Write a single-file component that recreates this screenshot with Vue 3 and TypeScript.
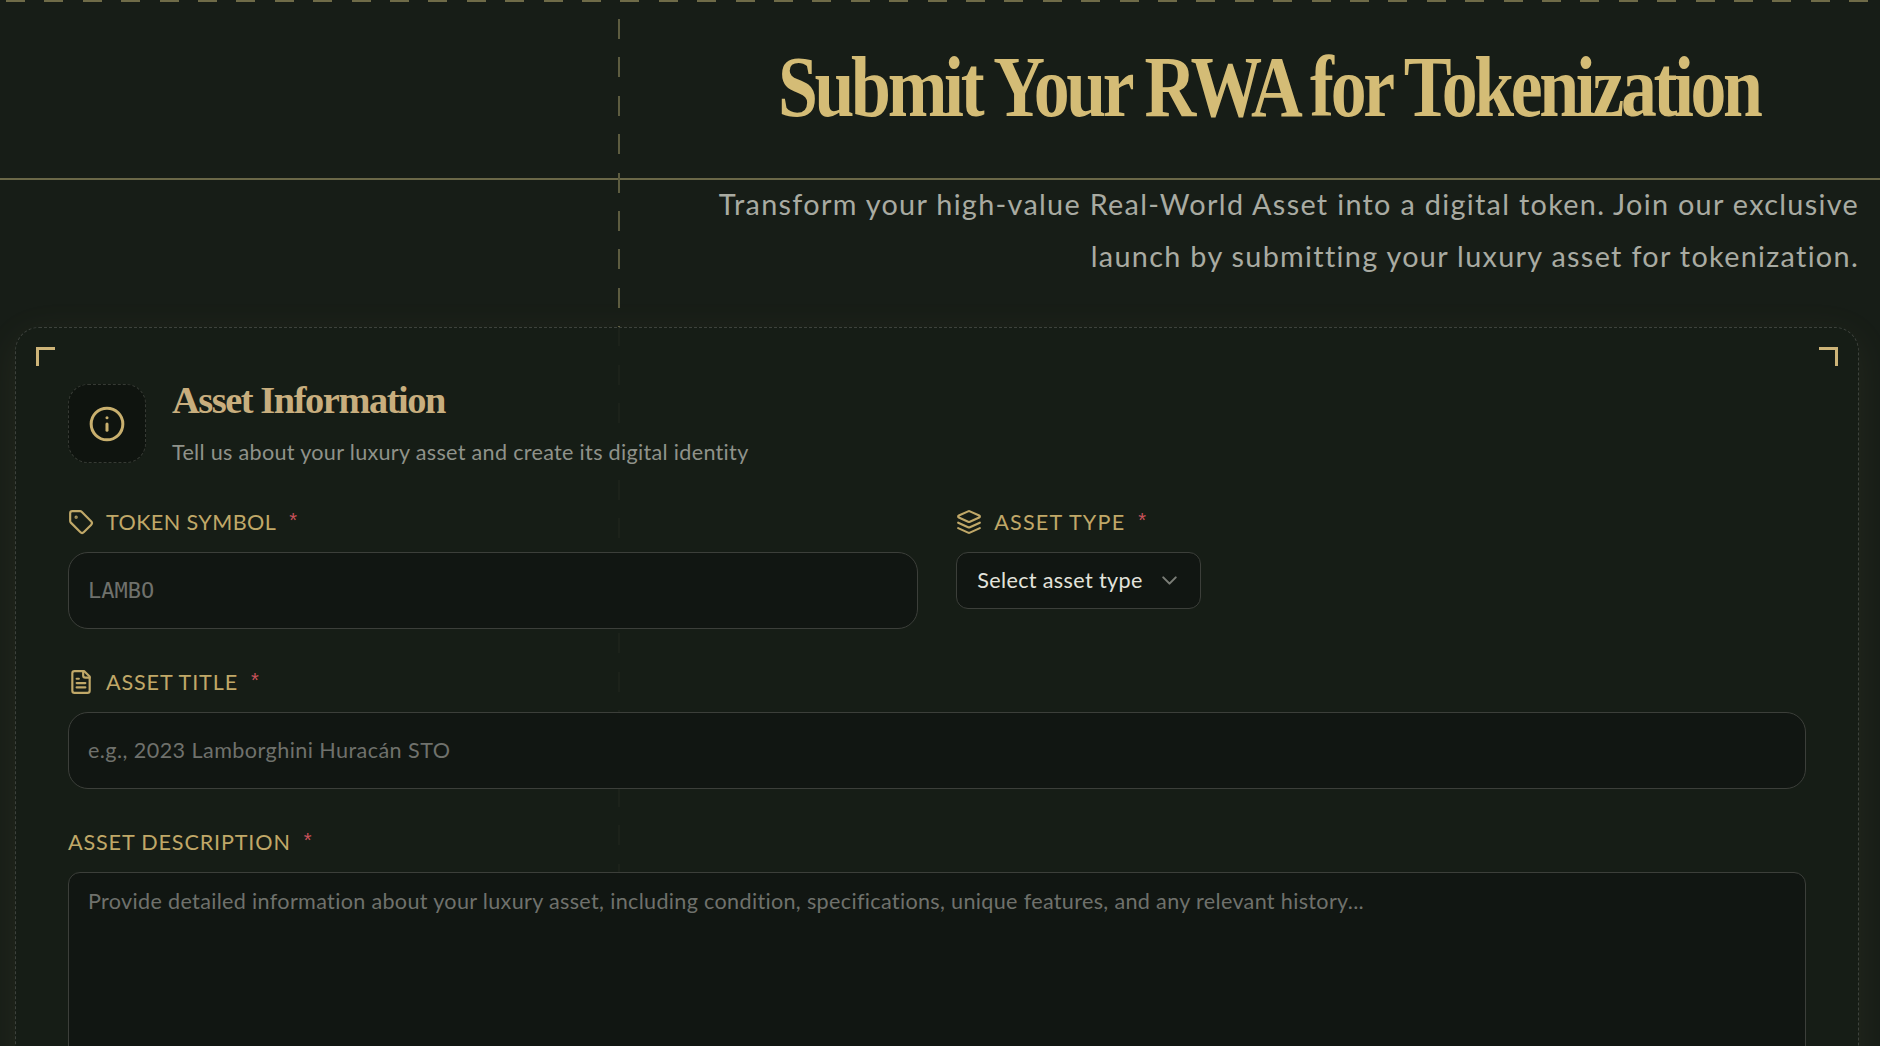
<script setup lang="ts">
import { reactive } from 'vue'

const form = reactive({
  symbol: '',
  title: '',
  description: '',
})
</script>

<template>
  <div class="page">
    <div class="top-dash"></div>
    <div class="v-dash"></div>

    <header class="hero">
      <div class="hero-title">
        <h1>Submit Your RWA for Tokenization</h1>
      </div>
      <p class="hero-sub">
        Transform your high-value Real-World Asset into a digital token. Join our exclusive<br />
        launch by submitting your luxury asset for tokenization.
      </p>
    </header>

    <section class="card">
      <span class="corner corner-l"></span>
      <span class="corner corner-r"></span>

      <div class="section-head">
        <div class="icon-box">
          <svg width="38" height="38" viewBox="0 0 24 24" fill="none" stroke="currentColor" stroke-width="1.9" stroke-linecap="round" stroke-linejoin="round">
            <circle cx="12" cy="12" r="10" />
            <path d="M12 16v-4" />
            <path d="M12 8h.01" />
          </svg>
        </div>
        <div>
          <h2>Asset Information</h2>
          <p>Tell us about your luxury asset and create its digital identity</p>
        </div>
      </div>

      <div class="two-col">
        <div class="field">
          <label class="label label-token">
            <svg class="label-icon" width="26" height="26" viewBox="0 0 24 24" fill="none" stroke="currentColor" stroke-width="2" stroke-linecap="round" stroke-linejoin="round">
              <path d="M12.586 2.586A2 2 0 0 0 11.172 2H4a2 2 0 0 0-2 2v7.172a2 2 0 0 0 .586 1.414l8.704 8.704a2.426 2.426 0 0 0 3.42 0l6.58-6.58a2.426 2.426 0 0 0 0-3.42z" />
              <circle cx="7.5" cy="7.5" r=".5" fill="currentColor" />
            </svg>
            <span>TOKEN SYMBOL</span><span class="req">*</span>
          </label>
          <input v-model="form.symbol" class="input mono" placeholder="LAMBO" />
        </div>
        <div class="field">
          <label class="label label-type">
            <svg class="label-icon" width="26" height="26" viewBox="0 0 24 24" fill="none" stroke="currentColor" stroke-width="2" stroke-linecap="round" stroke-linejoin="round">
              <path d="m12.83 2.18a2 2 0 0 0-1.66 0L2.6 6.08a1 1 0 0 0 0 1.83l8.58 3.91a2 2 0 0 0 1.66 0l8.58-3.9a1 1 0 0 0 0-1.83Z" />
              <path d="m22 17.65-9.17 4.16a2 2 0 0 1-1.66 0L2 17.65" />
              <path d="m22 12.65-9.17 4.16a2 2 0 0 1-1.66 0L2 12.65" />
            </svg>
            <span>ASSET TYPE</span><span class="req">*</span>
          </label>
          <button type="button" class="select">
            <span>Select asset type</span>
            <svg width="25" height="25" viewBox="0 0 24 24" fill="none" stroke="currentColor" stroke-width="2" stroke-linecap="round" stroke-linejoin="round">
              <path d="m6 9 6 6 6-6" />
            </svg>
          </button>
        </div>
      </div>

      <div class="field">
        <label class="label">
          <svg class="label-icon" width="26" height="26" viewBox="0 0 24 24" fill="none" stroke="currentColor" stroke-width="2" stroke-linecap="round" stroke-linejoin="round">
            <path d="M15 2H6a2 2 0 0 0-2 2v16a2 2 0 0 0 2 2h12a2 2 0 0 0 2-2V7Z" />
            <path d="M14 2v4a2 2 0 0 0 2 2h4" />
            <path d="M10 9H8" />
            <path d="M16 13H8" />
            <path d="M16 17H8" />
          </svg>
          <span>ASSET TITLE</span><span class="req">*</span>
        </label>
        <input v-model="form.title" class="input" placeholder="e.g., 2023 Lamborghini Huracán STO" />
      </div>

      <div class="field">
        <label class="label"><span>ASSET DESCRIPTION</span><span class="req">*</span></label>
        <textarea
          v-model="form.description"
          class="textarea"
          placeholder="Provide detailed information about your luxury asset, including condition, specifications, unique features, and any relevant history..."
        ></textarea>
      </div>
    </section>
  </div>
</template>

<style>
html,
body {
  margin: 0;
  background: #171d17;
  overflow: hidden;
}
</style>

<style scoped>
.page {
  position: relative;
  height: 1046px;
  overflow: hidden;
  background: #171d17;
  font-family: Lato, 'Open Sans', sans-serif;
}

.top-dash {
  position: absolute;
  top: 0;
  left: 0;
  right: 0;
  height: 2px;
  background: repeating-linear-gradient(90deg, #6f6b48 0 19px, transparent 19px 38.4px);
  background-position: 6px 0;
}

.v-dash {
  position: absolute;
  top: 19px;
  left: 618px;
  width: 2px;
  height: 860px;
  background: repeating-linear-gradient(180deg, #5d5c40 0 20px, transparent 20px 38.4px);
}

.hero-title {
  height: 180px;
  box-sizing: border-box;
  border-bottom: 2px solid #6b6848;
  padding: 42px 0 0 778px;
}

h1 {
  display: inline-block;
  margin: 0;
  font-family: 'Liberation Serif', serif;
  font-size: 86.4px;
  font-weight: 700;
  line-height: 90px;
  letter-spacing: -4px;
  white-space: nowrap;
  color: #d4bc76;
  transform: scaleX(0.83);
  transform-origin: left center;
}

.hero-sub {
  margin: -1px 0 0;
  padding-right: 21px;
  text-align: right;
  font-size: 28.8px;
  line-height: 51.84px;
  letter-spacing: 1.31px;
  color: #a9aba2;
}

.card {
  position: relative;
  box-sizing: border-box;
  margin: 44px 21px 0 15px;
  height: 760px;
  padding: 56px 52px;
  border: 1px dashed #3d423c;
  border-radius: 24px;
  background: rgba(23, 29, 23, 0.92);
  box-shadow: 0 8px 40px rgba(212, 188, 118, 0.07);
}

.corner {
  position: absolute;
  top: 19px;
  width: 19px;
  height: 19px;
  border-top: 3px solid #cdb478;
  box-sizing: border-box;
}

.corner-l {
  left: 20px;
  border-left: 3px solid #cdb478;
}

.corner-r {
  right: 20px;
  border-right: 3px solid #cdb478;
}

.section-head {
  display: flex;
  gap: 26px;
  margin-bottom: 41px;
}

.icon-box {
  display: flex;
  align-items: center;
  justify-content: center;
  box-sizing: border-box;
  width: 78px;
  height: 79px;
  padding-top: 2px;
  border: 1px dashed #363a34;
  border-radius: 20px;
  background: #0f140f;
  color: #c9b06e;
}

h2 {
  margin: -6px 0 0;
  font-family: 'Liberation Serif', serif;
  font-size: 38.4px;
  font-weight: 700;
  line-height: 44px;
  letter-spacing: -1.45px;
  color: #c8ae7e;
}

.section-head p {
  margin: 16px 0 0;
  font-size: 21.6px;
  line-height: 28px;
  letter-spacing: 0.3px;
  color: #8f928a;
}

.two-col {
  display: grid;
  grid-template-columns: 1fr 1fr;
  gap: 38.4px;
  align-items: start;
  margin-bottom: 38px;
}

.field {
  margin-bottom: 38px;
}

.two-col .field {
  margin-bottom: 0;
}

.label {
  display: flex;
  align-items: center;
  height: 30px;
  margin-bottom: 15px;
  font-size: 21.6px;
  letter-spacing: 0.85px;
  color: #c0a868;
}

.label-token {
  letter-spacing: 0.4px;
}

.label-type {
  letter-spacing: 1.2px;
}

.label-icon {
  margin-right: 12px;
  flex: none;
}

.req {
  margin: -2px 0 0 13px;
  font-family: 'Liberation Sans', sans-serif;
  font-size: 20px;
  color: #c9525a;
}

.input,
.textarea {
  display: block;
  box-sizing: border-box;
  width: 100%;
  border: 1px solid #3c3f3a;
  background: #111612;
  padding: 0 19px;
  font-family: inherit;
  font-size: 21.6px;
  color: #e3e3dc;
  outline: none;
}

.input {
  height: 77px;
  border-radius: 20px;
  letter-spacing: 0.42px;
}

.textarea {
  height: 230px;
  padding-top: 15px;
  border-radius: 12px;
  letter-spacing: 0.32px;
  resize: none;
}

.mono {
  font-family: 'DejaVu Sans Mono', monospace;
  font-size: 22px;
  letter-spacing: 0;
}

.input::placeholder,
.textarea::placeholder {
  color: #6f716c;
  opacity: 1;
}

.select {
  display: flex;
  align-items: center;
  gap: 14px;
  box-sizing: border-box;
  height: 57px;
  padding: 0 18px 0 20px;
  border: 1px solid #3c3f3a;
  border-radius: 12px;
  background: #111612;
  font-family: inherit;
  font-size: 21.6px;
  letter-spacing: 0.35px;
  color: #e3e3dc;
  white-space: nowrap;
}

.select svg {
  color: #7a7d76;
  flex: none;
}
</style>
